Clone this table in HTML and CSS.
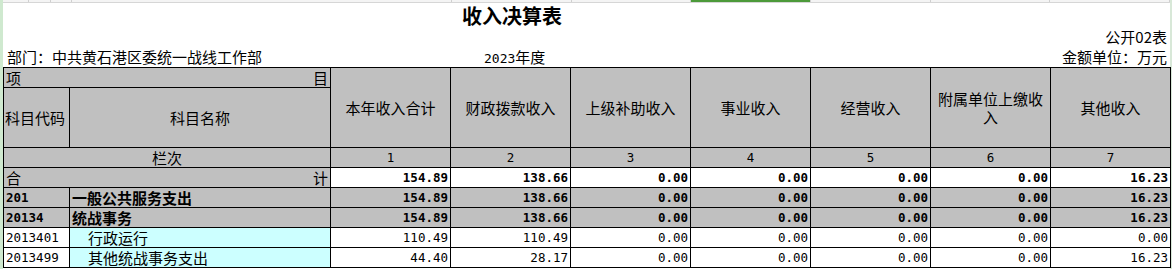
FILE: index.html
```html
<!DOCTYPE html>
<html lang="zh">
<head>
<meta charset="utf-8">
<title>收入决算表</title>
<link rel="stylesheet" href="styles.css">
</head>
<body>
<div class="sheet">
  <div class="gridband">
    <span class="gl" style="width:26px"></span>
    <span class="gl" style="width:22px"></span>
    <span class="gl" style="width:21px"></span>
    <span class="gl" style="width:381px"></span>
    <span class="gl" style="width:120px"></span>
    <span class="gl" style="width:120px"></span>
    <span class="gl sel" style="width:120px"></span>
    <span class="gl" style="width:120px"></span>
    <span class="gl" style="width:120px"></span>
    <span class="gl" style="width:120px"></span>
  </div>
  <div class="head">
    <div class="title-row"><span class="title">收入决算表</span></div>
    <div class="form-row"><span class="right">公开02表</span></div>
    <div class="meta-row">
      <span class="dept">部门：中共黄石港区委统一战线工作部</span>
      <span class="year"><span class="num">2023</span>年度</span>
      <span class="right">金额单位：万元</span>
    </div>
  </div>
  <table class="tbl">
    <colgroup>
      <col class="c-code">
      <col class="c-name">
      <col class="c-n"><col class="c-n"><col class="c-n"><col class="c-n"><col class="c-n"><col class="c-n"><col class="c-n">
    </colgroup>
    <tr class="r20">
      <td colspan="2" class="gray split"><span>项</span><span>目</span></td>
      <td rowspan="2" class="gray hd">本年收入合计</td>
      <td rowspan="2" class="gray hd">财政拨款收入</td>
      <td rowspan="2" class="gray hd">上级补助收入</td>
      <td rowspan="2" class="gray hd">事业收入</td>
      <td rowspan="2" class="gray hd">经营收入</td>
      <td rowspan="2" class="gray hd">附属单位上缴收入</td>
      <td rowspan="2" class="gray hd">其他收入</td>
    </tr>
    <tr class="r60">
      <td class="gray codehd">科目代码</td>
      <td class="gray hd">科目名称</td>
    </tr>
    <tr class="r20">
      <td colspan="2" class="gray ctr">栏次</td>
      <td class="gray ctr num">1</td>
      <td class="gray ctr num">2</td>
      <td class="gray ctr num">3</td>
      <td class="gray ctr num">4</td>
      <td class="gray ctr num">5</td>
      <td class="gray ctr num">6</td>
      <td class="gray ctr num">7</td>
    </tr>
    <tr class="r20">
      <td colspan="2" class="gray split"><span>合</span><span>计</span></td>
      <td class="amt bold">154.89</td>
      <td class="amt bold">138.66</td>
      <td class="amt bold">0.00</td>
      <td class="amt bold">0.00</td>
      <td class="amt bold">0.00</td>
      <td class="amt bold">0.00</td>
      <td class="amt bold">16.23</td>
    </tr>
    <tr class="r20 bold gray-row">
      <td class="code">201</td>
      <td class="name">一般公共服务支出</td>
      <td class="amt">154.89</td>
      <td class="amt">138.66</td>
      <td class="amt">0.00</td>
      <td class="amt">0.00</td>
      <td class="amt">0.00</td>
      <td class="amt">0.00</td>
      <td class="amt">16.23</td>
    </tr>
    <tr class="r20 bold gray-row">
      <td class="code">20134</td>
      <td class="name">统战事务</td>
      <td class="amt">154.89</td>
      <td class="amt">138.66</td>
      <td class="amt">0.00</td>
      <td class="amt">0.00</td>
      <td class="amt">0.00</td>
      <td class="amt">0.00</td>
      <td class="amt">16.23</td>
    </tr>
    <tr class="r20">
      <td class="code">2013401</td>
      <td class="name cyan indent">行政运行</td>
      <td class="amt">110.49</td>
      <td class="amt">110.49</td>
      <td class="amt">0.00</td>
      <td class="amt">0.00</td>
      <td class="amt">0.00</td>
      <td class="amt">0.00</td>
      <td class="amt">0.00</td>
    </tr>
    <tr class="r20">
      <td class="code">2013499</td>
      <td class="name cyan indent">其他统战事务支出</td>
      <td class="amt">44.40</td>
      <td class="amt">28.17</td>
      <td class="amt">0.00</td>
      <td class="amt">0.00</td>
      <td class="amt">0.00</td>
      <td class="amt">0.00</td>
      <td class="amt">16.23</td>
    </tr>
  </table>
</div>
</body>
</html>
```

FILE: styles.css
```css
html, body {
  margin: 0;
  padding: 0;
  background: #ffffff;
}
body {
  font-family: "Noto Sans CJK SC", "Noto Sans", sans-serif;
  font-size: 15px;
  color: #000;
  width: 1172px;
  height: 269px;
  overflow: hidden;
}
.sheet {
  border-left: 3px solid #cfe9cf;
  border-right: 2px solid #d8e8d8;
  height: 269px;
  box-sizing: border-box;
}
.gridband {
  display: flex;
  height: 3px;
  border-bottom: 1px solid #d6d6d6;
  box-sizing: border-box;
  background: #f4f4f4;
}
.gl {
  display: block;
  height: 100%;
  border-right: 1px solid #d0d0d0;
  box-sizing: border-box;
}
.gl.sel {
  background: #4c9a3a;
}
.head {
  display: grid;
  grid-template-rows: 25px 19px 20px;
}
.title-row {
  display: flex;
  align-items: flex-end;
  padding-left: 459px;
}
.title {
  font-size: 20px;
  font-weight: bold;
  line-height: 24px;
}
.form-row {
  display: flex;
  justify-content: flex-end;
  align-items: flex-start;
  padding: 1px 3px 0 0;
}
.form-row .right {
  display: block;
  line-height: 16px;
  height: 16px;
}
.meta-row {
  display: grid;
  grid-template-columns: 477px 1fr auto;
  align-items: end;
  padding: 0 3px 2px 4px;
  line-height: 16px;
}
.meta-row > span {
  display: block;
  height: 16px;
}
.num, .amt, .code {
  font-family: "DejaVu Sans Mono", "Liberation Mono", monospace;
  font-size: 12.5px;
}
.year .num { font-size: 13px; }
.tbl {
  border-collapse: collapse;
  table-layout: fixed;
  width: 1168px;
}
.c-code { width: 66px; }
.c-name { width: 261px; }
.c-n { width: 120px; }
.tbl td {
  border: 1px solid #000;
  padding: 0 2px;
  line-height: 18px;
  white-space: nowrap;
  overflow: hidden;
}
.r20 td { height: 19px; }
.r60 td { height: 59px; }
.gray { background: #c0c0c0; }
.gray-row td { background: #c0c0c0; }
.cyan { background: #ccffff; }
.hd {
  text-align: center;
  white-space: normal !important;
  padding: 0 5px !important;
  line-height: 18px;
}
.codehd { text-align: left; padding: 0 1px !important; }
.ctr { text-align: center; }
.split span:first-child { float: left; }
.split span:last-child { float: right; }
.bold { font-weight: bold; }
.amt { text-align: right; }
.indent { padding-left: 18px !important; }
```
